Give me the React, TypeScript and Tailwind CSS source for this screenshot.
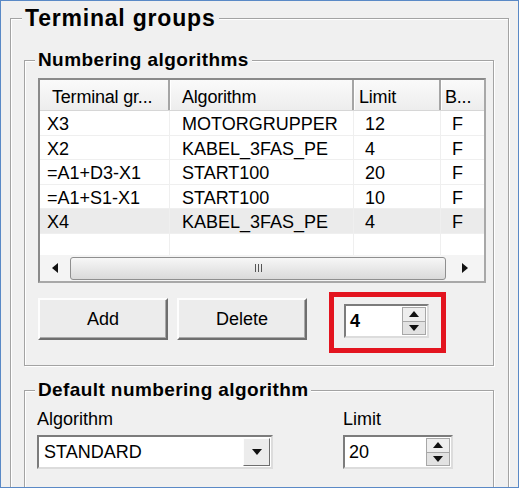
import React from 'react';

type Row = { group: string; algorithm: string; limit: string; b: string; selected?: boolean };

const rows: Row[] = [
  { group: 'X3', algorithm: 'MOTORGRUPPER', limit: '12', b: 'F' },
  { group: 'X2', algorithm: 'KABEL_3FAS_PE', limit: '4', b: 'F' },
  { group: '=A1+D3-X1', algorithm: 'START100', limit: '20', b: 'F' },
  { group: '=A1+S1-X1', algorithm: 'START100', limit: '10', b: 'F' },
  { group: 'X4', algorithm: 'KABEL_3FAS_PE', limit: '4', b: 'F', selected: true },
];

const Tri = ({ dir }: { dir: 'up' | 'down' | 'left' | 'right' }) => {
  const pts = {
    up: '0,6 5,0 10,6',
    down: '0,0 10,0 5,6',
    left: '6,0 6,10 0,5',
    right: '0,0 0,10 6,5',
  }[dir];
  const vertical = dir === 'up' || dir === 'down';
  return (
    <svg width={vertical ? 10 : 6} height={vertical ? 6 : 10} viewBox={vertical ? '0 0 10 6' : '0 0 6 10'}>
      <polygon points={pts} fill="#111" />
    </svg>
  );
};

const SpinBox = ({ value, bold, width }: { value: string; bold?: boolean; width: string }) => (
  <div className={`${width} flex h-[34px] border-2 border-t-[#7c7c7c] border-l-[#7c7c7c] border-r-[#dcdcdc] border-b-[#dcdcdc] bg-white`}>
    <span className={`flex-1 pl-[4px] leading-[30px] ${bold ? 'font-bold' : ''}`}>{value}</span>
    <div className="my-[1px] mr-[1px] flex w-[24px] flex-col border border-[#a7a7a7] bg-[#e6e6e6]">
      <div className="flex flex-1 items-center justify-center border-b border-[#a7a7a7] bg-[#eeeeee]">
        <Tri dir="up" />
      </div>
      <div className="flex flex-1 items-center justify-center bg-[#e2e2e2]">
        <Tri dir="down" />
      </div>
    </div>
  </div>
);

const Button = ({ label }: { label: string }) => (
  <button className="h-[42px] w-[130px] border-2 border-t-[#fdfdfd] border-l-[#fdfdfd] border-r-[#6e6e6e] border-b-[#6e6e6e] bg-[#ececec] shadow-[inset_-1px_-1px_0_#a9a9a9] text-[18px] text-black">
    {label}
  </button>
);

const GroupBox = ({ title, big, className, children }: { title: string; big?: boolean; className?: string; children: React.ReactNode }) => (
  <fieldset className={`border border-[#a3a3a3] shadow-[inset_1px_1px_0_#fff,1px_1px_0_#fff] ${className ?? ''}`}>
    <legend
      className={`bg-[#f0f0f0] px-[3px] font-bold text-black ${
        big ? 'ml-[11px] text-[23px] leading-[26px] tracking-[0.8px]' : 'ml-[10px] text-[19px] leading-[22px] tracking-[0.4px]'
      }`}
    >
      {title}
    </legend>
    {children}
  </fieldset>
);

const rowCols = ['w-[130px] pl-[7px]', 'w-[184px] pl-[12px]', 'w-[87px] pl-[11px]', 'flex-1 pl-[11px]'];
const headCols = ['w-[130px] pl-[12px]', 'w-[184px] pl-[12px]', 'w-[87px] pl-[5px]', 'flex-1 pl-[4px]'];

export default function App() {
  return (
    <div className="h-[488px] w-[519px] overflow-hidden border border-[#5a89c6] bg-[#f0f0f0] font-['Liberation_Sans',Arial,sans-serif] text-[18px] text-black">
      <GroupBox title="Terminal groups" big className="ml-[9px] mt-[4px] h-[560px] w-[499px]">
        <div className="pl-[13px] pr-[14px] pt-[18px]">
          <GroupBox title="Numbering algorithms">
            <div className="pb-[12px] pl-[13px] pr-[7px] pt-[7px]">
              {/* list view */}
              <div className="flex h-[205px] flex-col border-2 border-t-[#8a8a8a] border-l-[#8a8a8a] border-r-[#a8a8a8] border-b-[#a8a8a8] bg-white">
                <div className="flex h-[31px] shrink-0 border-b border-[#d6d6d6] bg-gradient-to-b from-[#fafafa] to-[#ededed]">
                  {['Terminal gr...', 'Algorithm', 'Limit', 'B...'].map((h, i) => (
                    <div
                      key={h}
                      className={`${headCols[i]} whitespace-nowrap pt-[3px] leading-[28px] tracking-[-0.2px] ${
                        i < 3 ? 'border-r-2 border-[#a5a5a5] shadow-[1px_0_0_#fff]' : ''
                      }`}
                    >
                      {h}
                    </div>
                  ))}
                </div>
                <div className="flex-1 overflow-hidden">
                  {[...rows, null].map((r, idx) => (
                    <div
                      key={idx}
                      className={`flex h-[24.5px] border-b border-[#efefef] ${r?.selected ? 'bg-[#ebebeb]' : 'bg-white'}`}
                    >
                      {(r ? [r.group, r.algorithm, r.limit, r.b] : ['', '', '', '']).map((c, i) => (
                        <div
                          key={i}
                          className={`${rowCols[i]} whitespace-nowrap pt-[2px] leading-[22px] ${i < 3 ? 'border-r border-[#efefef]' : ''}`}
                        >
                          {c}
                        </div>
                      ))}
                    </div>
                  ))}
                </div>
                {/* horizontal scrollbar */}
                <div className="flex h-[26px] shrink-0 items-center bg-[#f4f4f4]">
                  <div className="flex w-[30px] justify-center">
                    <Tri dir="left" />
                  </div>
                  <div className="relative flex h-[23px] flex-1 items-center justify-center rounded-[3px] border border-[#8f8f8f] bg-gradient-to-b from-[#f7f7f7] to-[#dadada]">
                    <div className="flex gap-[2px]">
                      <span className="h-[8px] w-[1px] bg-[#555]" />
                      <span className="h-[8px] w-[1px] bg-[#555]" />
                      <span className="h-[8px] w-[1px] bg-[#555]" />
                    </div>
                  </div>
                  <div className="flex w-[38px] justify-center">
                    <Tri dir="right" />
                  </div>
                </div>
              </div>

              <div className="mt-[9px] flex items-start">
                <div className="mt-[6px] flex gap-[9px]">
                  <Button label="Add" />
                  <Button label="Delete" />
                </div>
                <div className="ml-[22px] h-[61px] w-[117px] border-[5px] border-[#e3141f] pl-[10px] pt-[7px]">
                  <SpinBox value="4" bold width="w-[85px]" />
                </div>
              </div>
            </div>
          </GroupBox>

          <GroupBox title="Default numbering algorithm" className="mt-[13px] h-[160px]">
            <div className="flex gap-[70px] pl-[12px] pt-[8px]">
              <div>
                <div className="leading-[21px]">Algorithm</div>
                <div className="mt-[5px] flex h-[34px] w-[236px] border-2 border-t-[#7c7c7c] border-l-[#7c7c7c] border-r-[#dcdcdc] border-b-[#dcdcdc] bg-white">
                  <span className="flex-1 pl-[5px] leading-[30px]">STANDARD</span>
                  <div className="my-[1px] mr-[1px] flex w-[27px] items-center justify-center border border-t-[#fdfdfd] border-l-[#fdfdfd] border-r-[#6e6e6e] border-b-[#6e6e6e] bg-[#ececec]">
                    <Tri dir="down" />
                  </div>
                </div>
              </div>
              <div>
                <div className="leading-[21px]">Limit</div>
                <div className="mt-[5px]">
                  <SpinBox value="20" width="w-[110px]" />
                </div>
              </div>
            </div>
          </GroupBox>
        </div>
      </GroupBox>
    </div>
  );
}
